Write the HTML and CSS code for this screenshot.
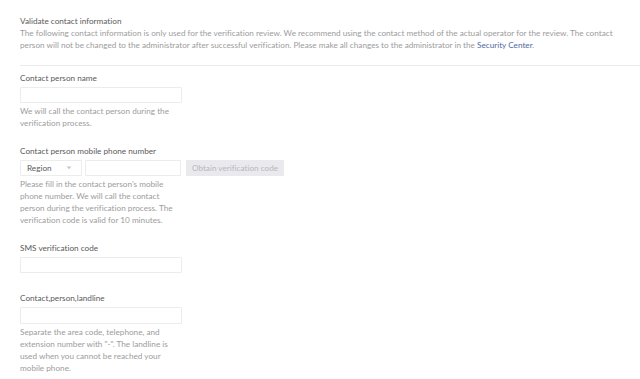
FILE: index.html
```html
<!DOCTYPE html>
<html lang="en">
<head>
<meta charset="utf-8">
<title>Validate contact information</title>
<link rel="stylesheet" href="styles.css">
</head>
<body>
<div class="page">
  <header class="intro">
    <h1 class="title">Validate contact information</h1>
    <p class="desc">The following contact information is only used for the verification review. We recommend using the contact method of the actual operator for the review. The contact<br>person will not be changed to the administrator after successful verification. Please make all changes to the administrator in the <a class="link" href="#">Security Center</a>.</p>
  </header>
  <form class="form">
    <div class="item">
      <label class="label">Contact person name</label>
      <div class="controls"><input class="input input-full" type="text"></div>
      <p class="help">We will call the contact person during the<br>verification process.</p>
    </div>
    <div class="item">
      <label class="label">Contact person mobile phone number</label>
      <div class="controls">
        <div class="select"><span>Region</span><svg class="caret" width="6" height="4" viewBox="0 0 6 4"><path d="M0.5 0.5 L3 3.2 L5.5 0.5 Z" fill="#c8c8c8"/></svg></div>
        <input class="input input-phone" type="text">
        <button class="btn" type="button" disabled>Obtain verification code</button>
      </div>
      <p class="help">Please fill in the contact person’s mobile<br>phone number. We will call the contact<br>person during the verification process. The<br>verification code is valid for 10 minutes.</p>
    </div>
    <div class="item item-plain">
      <label class="label">SMS verification code</label>
      <div class="controls"><input class="input input-full" type="text"></div>
    </div>
    <div class="item">
      <label class="label">Contact,person,landline</label>
      <div class="controls"><input class="input input-full input-tall" type="text"></div>
      <p class="help">Separate the area code, telephone, and<br>extension number with "-". The landline is<br>used when you cannot be reached your<br>mobile phone.</p>
    </div>
  </form>
</div>
</body>
</html>
```

FILE: styles.css
```css
* { box-sizing: border-box; }
html, body { margin: 0; padding: 0; background: #fff; }
body {
  font-family: "Lato", "Open Sans", sans-serif;
  font-size: 8.2px;
  line-height: 12px;
  color: #9c9c9c;
  font-variant-ligatures: none;
}
.page { padding: 15px 0 0 20px; }
.intro {
  border-bottom: 1px solid #ececec;
  padding-bottom: 14px;
}
.title {
  margin: 0;
  font-size: 8.2px;
  font-weight: normal;
  color: #5a5a5a;
  line-height: 12px;
}
.desc { margin: 0; white-space: nowrap; }
.link { color: #4f6aa3; text-decoration: none; }
.form { padding-top: 6px; }
.item { margin-bottom: 16px; }
.item-plain { margin-bottom: 19px; }
.label { display: block; color: #5a5a5a; margin-bottom: 3px; }
.controls { display: flex; align-items: center; gap: 3px; margin-bottom: 2px; }
.input {
  height: 16px;
  border: 1px solid #ececec;
  border-radius: 1px;
  background: #fff;
  padding: 0 4px;
  font: inherit;
  outline: none;
}
.input-tall { height: 17px; }
.input-full { width: 162px; }
.input-phone { width: 96px; }
.select {
  width: 62px;
  height: 16px;
  border: 1px solid #ececec;
  border-radius: 1px;
  display: flex;
  align-items: center;
  justify-content: space-between;
  padding: 0 9px 0 6px;
  color: #5a5a5a;
}
.caret { display: block; }
.btn {
  margin-left: 2px;
  width: 98px;
  height: 16px;
  border: none;
  border-radius: 1px;
  background: #e9e9ee;
  color: #b8b8bc;
  font: inherit;
  padding: 0;
}
.help { margin: 0; white-space: nowrap; }
```
